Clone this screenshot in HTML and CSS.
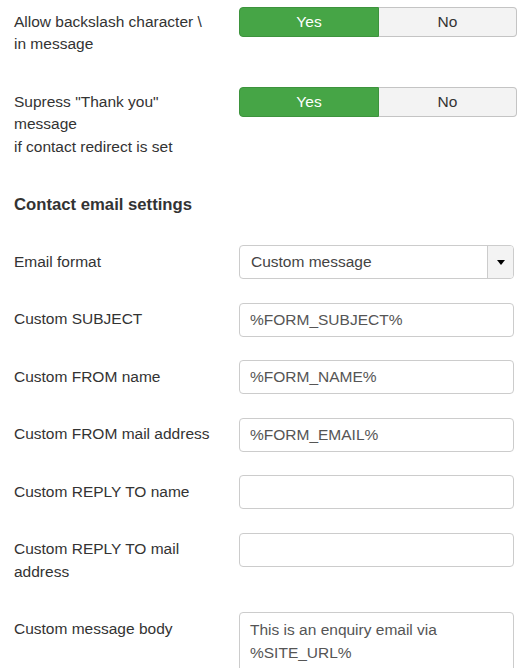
FILE: index.html
```html
<!DOCTYPE html>
<html>
<head>
<meta charset="utf-8">
<link rel="stylesheet" href="styles.css">
</head>
<body>
<div class="form">
  <div class="row">
    <label class="label">Allow backslash character \ in message</label>
    <div class="toggle"><span class="opt on">Yes</span><span class="opt off">No</span></div>
  </div>
  <div class="row">
    <label class="label">Supress "Thank you" message<br>if contact redirect is set</label>
    <div class="toggle"><span class="opt on">Yes</span><span class="opt off">No</span></div>
  </div>
  <h3 class="heading">Contact email settings</h3>
  <div class="row">
    <label class="label">Email format</label>
    <div class="select"><span class="select-value">Custom message</span><span class="select-arrow"><span class="caret"></span></span></div>
  </div>
  <div class="row">
    <label class="label">Custom SUBJECT</label>
    <input class="input" type="text" value="%FORM_SUBJECT%">
  </div>
  <div class="row">
    <label class="label">Custom FROM name</label>
    <input class="input" type="text" value="%FORM_NAME%">
  </div>
  <div class="row">
    <label class="label">Custom FROM mail address</label>
    <input class="input" type="text" value="%FORM_EMAIL%">
  </div>
  <div class="row">
    <label class="label">Custom REPLY TO name</label>
    <input class="input" type="text" value="">
  </div>
  <div class="row">
    <label class="label">Custom REPLY TO mail address</label>
    <input class="input" type="text" value="">
  </div>
  <div class="row">
    <label class="label">Custom message body</label>
    <textarea class="textarea">This is an enquiry email via %SITE_URL%</textarea>
  </div>
</div>
</body>
</html>
```
FILE: styles.css
```css
html, body {
  margin: 0;
  padding: 0;
  background: #fff;
}
body {
  font-family: "Liberation Sans", Arial, sans-serif;
  font-size: 15.5px;
  line-height: 22.5px;
  color: #333;
}
.form {
  padding: 5px 0 0 14px;
}
.row {
  display: flex;
  align-items: flex-start;
  margin-bottom: 23.5px;
}
.label {
  display: block;
  width: 200px;
  margin-right: 25px;
  padding: 5.75px 0 5.5px;
  flex: none;
}
.toggle {
  display: flex;
  width: 278px;
  height: 30px;
  margin-top: 2px;
}
.opt {
  display: flex;
  align-items: center;
  justify-content: center;
  box-sizing: border-box;
  height: 30px;
}
.opt.on {
  width: 140px;
  background: #46a546;
  border: 1px solid #3d933d;
  border-radius: 4px 0 0 4px;
  color: #fff;
}
.opt.off {
  width: 138px;
  background: #f3f3f3;
  border: 1px solid #c4c4c4;
  border-left: none;
  border-radius: 0 4px 4px 0;
  color: #333;
}
.heading {
  margin: 0 0 23.5px;
  padding: 6.75px 0 5.25px;
  font-size: 16.7px;
  line-height: 22.5px;
  font-weight: bold;
  color: #333;
}
.select {
  display: flex;
  box-sizing: border-box;
  width: 275px;
  height: 34px;
  border: 1px solid #ccc;
  border-radius: 4px;
  overflow: hidden;
}
.select-value {
  flex: 1;
  padding-left: 11px;
  line-height: 32px;
  color: #444;
}
.select-arrow {
  width: 25px;
  border-left: 1px solid #ccc;
  background: #f3f3f3;
  display: flex;
  align-items: center;
  justify-content: center;
}
.caret {
  width: 0;
  height: 0;
  border-left: 4.5px solid transparent;
  border-right: 4.5px solid transparent;
  border-top: 5px solid #000;
  margin-top: 1px;
}
.input, .textarea {
  box-sizing: border-box;
  width: 275px;
  border: 1px solid #ccc;
  border-radius: 4px;
  font-family: "Liberation Sans", Arial, sans-serif;
  font-size: 15.5px;
  line-height: 22.5px;
  color: #555;
  background: #fff;
  margin: 0;
  outline: none;
}
.input {
  height: 34px;
  padding: 0 10px;
}
.textarea {
  display: block;
  height: 110px;
  padding: 5.75px 10px;
  resize: none;
}
```
